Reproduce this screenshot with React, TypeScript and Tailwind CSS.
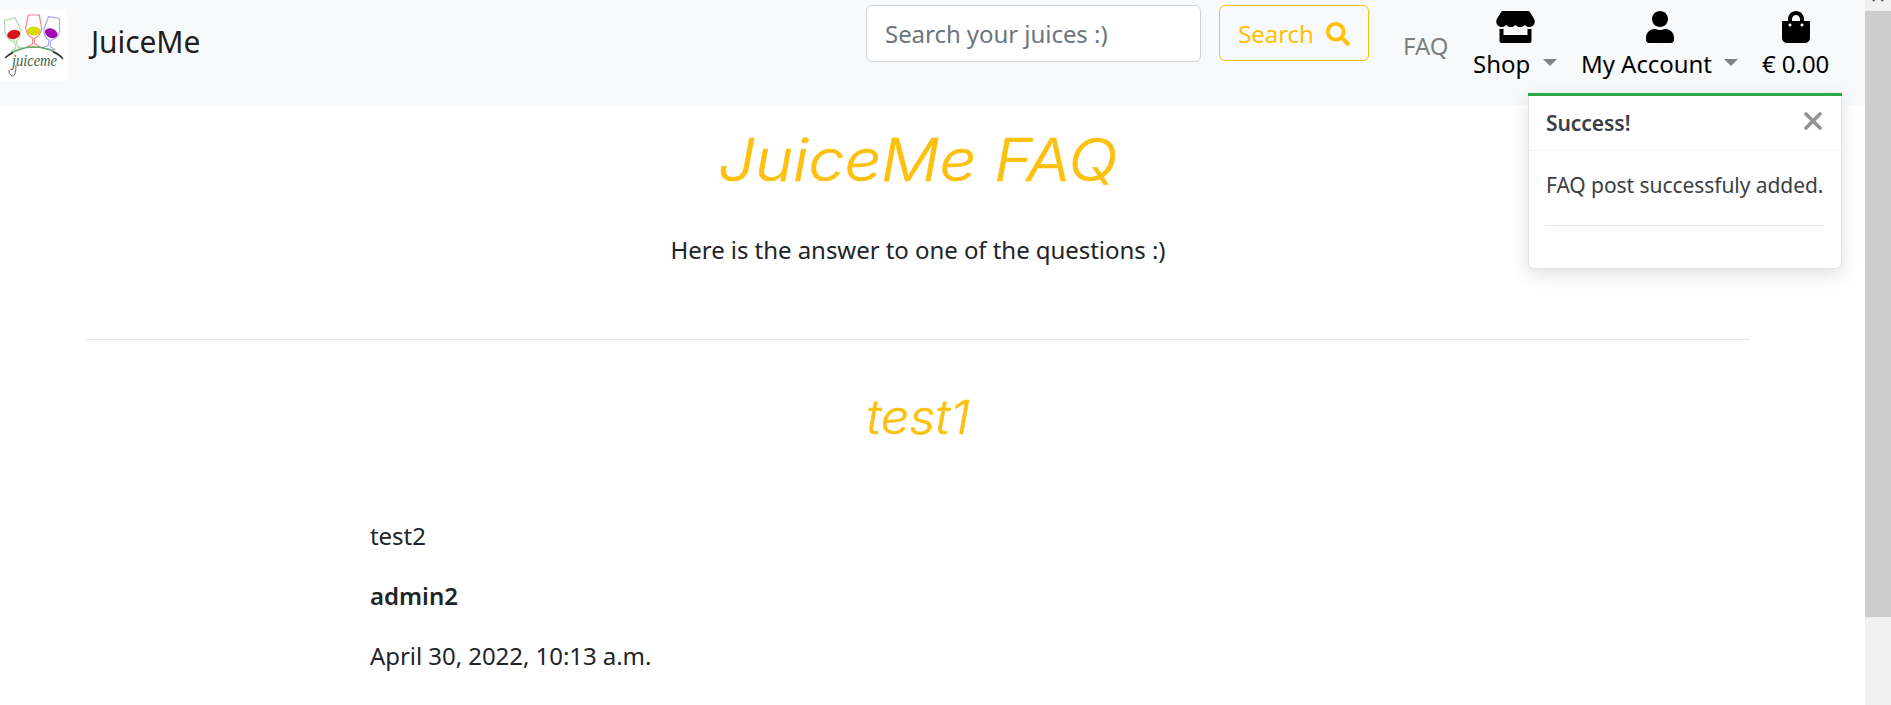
import type { ReactNode } from "react";
import { FaSearch, FaShoppingBag, FaStore, FaUser } from "react-icons/fa";

function Glass({ x, y, tilt, stroke, fill }: { x: number; y: number; tilt: number; stroke: string; fill: string }) {
  return (
    <g transform={`translate(${x} ${y}) rotate(${tilt})`} fill="none" stroke={stroke} strokeWidth="1.2">
      <ellipse cx="0" cy="16" rx="6.6" ry="4.6" transform={`rotate(${tilt > 0 ? 12 : 0} 0 16)`} fill={fill} stroke="none" />
      <path d="M-5.5 0H5.5L8 13Q7 21 1 23V29L7 32H-7L-1 29V23Q-7 21-8 13Z" opacity="0.7" />
    </g>
  );
}

function Logo() {
  return (
    <svg className="h-[72px] w-[67px] shrink-0 bg-white" viewBox="0 0 67 72">
      <Glass x={9.8} y={10} tilt={-14} stroke="#8fce80" fill="#d91020" />
      <Glass x={33.7} y={6} tilt={0} stroke="#f05060" fill="#d8dc00" />
      <Glass x={54} y={8.5} tilt={10} stroke="#8582e4" fill="#a409b5" />
      <path d="M6 48Q18 38 34 38Q50 38 62 48" fill="none" stroke="#5cab62" strokeWidth="1.5" />
      <path d="M5 49Q8 46 13 43.500M53 43Q59 45 63 50" fill="none" stroke="#333" strokeWidth="1.4" />
      <text x="12" y="57" textLength="45" lengthAdjust="spacingAndGlyphs" fontFamily="Liberation Serif, serif" fontStyle="italic" fontSize="16" fill="#3f5f45">
        juiceme
      </text>
      <path d="M16 56Q16 68 12 67Q8 65 9 61" fill="none" stroke="#666" strokeWidth="1" />
    </svg>
  );
}

function Caret() {
  return (
    <svg className="mt-[-4px] h-[7px] w-[14px]" viewBox="0 0 14 7">
      <path d="M0 0H14L7 7Z" fill="#808182" />
    </svg>
  );
}

function NavItem({ icon, label, caret, className }: { icon: ReactNode; label: string; caret?: boolean; className: string }) {
  return (
    <a className={`flex flex-col items-center pt-[11px] text-black ${className}`}>
      {icon}
      <span className="mt-[3px] flex w-full items-center justify-between whitespace-nowrap leading-9">
        {label}
        {caret && <Caret />}
      </span>
    </a>
  );
}

function Header() {
  return (
    <header className="flex h-[105px] items-start bg-[#f8f9fa]">
      <div className="flex items-center pt-[9px]">
        <Logo />
        <span className="mb-[7px] ml-[24px] text-[30px] leading-[45px] tracking-[-0.1px] text-black/90">JuiceMe</span>
      </div>
      <form className="ml-auto flex items-start pt-[5px]">
        <input
          className="h-[57px] w-[335px] rounded-[6px] border border-[#ced4da] bg-white px-[18px] text-[24px] tracking-[-0.05px] placeholder:text-[#6c757d] placeholder:opacity-100"
          placeholder="Search your juices :)"
        />
        <button type="button" className="ml-[18px] flex h-[56px] w-[150px] items-center justify-center gap-[12px] rounded-[6px] border border-[#ffc107] pt-px text-[#ffc107]">
          Search
          <FaSearch className="size-[24px]" />
        </button>
      </form>
      <nav className="mr-[36px] flex items-start">
        <a className="ml-[34px] w-[46px] pt-[28px] leading-9 text-black/50">FAQ</a>
        <NavItem className="ml-[24px] w-[84px]" icon={<FaStore className="h-[32px] w-[39px]" />} label="Shop" caret />
        <NavItem className="ml-[24px] w-[157px]" icon={<FaUser className="h-[32px] w-[28px]" />} label="My Account" caret />
        <NavItem className="ml-[24px] w-[67px]" icon={<FaShoppingBag className="h-[32px] w-[28px]" />} label="€ 0.00" />
      </nav>
    </header>
  );
}

function Toast() {
  return (
    <aside className="absolute top-[93px] left-[1528px] h-[176px] w-[314px] rounded-b-[6px] border-x border-b border-black/10 bg-white text-[#3b4045] shadow-[0_6px_18px_rgba(0,0,0,0.12)]">
      <div className="-mx-px h-[3px] bg-[#28a745]" />
      <div className="flex h-[55px] items-center justify-between border-b border-black/5 pr-[19px] pl-[17px]">
        <strong className="mt-[2px] text-[21px] font-semibold">Success!</strong>
        <svg className="mt-[-4px] size-[18px]" viewBox="0 0 18 18">
          <path d="M2 2L16 16M16 2L2 16" stroke="#929496" strokeWidth="3.6" strokeLinecap="round" />
        </svg>
      </div>
      <p className="px-[17px] pt-[18px] text-[21px] leading-[32px] tracking-[-0.06px] whitespace-nowrap">FAQ post successfuly added.</p>
      <hr className="mx-[17px] mt-[24px] border-black/10" />
    </aside>
  );
}

function Scrollbar() {
  return (
    <div className="flex w-[26px] shrink-0 flex-col bg-[#f0f0f0]">
      <svg className="h-[11px] w-full" viewBox="0 0 26 11">
        <path d="M8 1L13-4L18 1" fill="none" stroke="#505050" strokeWidth="2" />
      </svg>
      <div className="h-[606px] bg-[#cdcdcd]" />
    </div>
  );
}

export default function App() {
  return (
    <div className="relative flex h-[705px] w-[1891px] overflow-hidden bg-white font-['Noto_Sans',sans-serif] text-[24px] tracking-[-0.05px] text-[#212529]">
      <div className="flex-1">
        <Header />
        <main className="px-[86px]">
          <div className="mr-[29px] flex flex-col items-center">
            <h1 className="mt-[19px] h-[72px] scale-x-[1.11] text-[58.5px] leading-[72px] font-light tracking-[-0.1px] whitespace-nowrap text-[#fcc010] italic font-['Inter',sans-serif] [-webkit-text-stroke:0.6px_#fcc010]">JuiceMe FAQ</h1>
            <p className="mt-[36px] leading-9">Here is the answer to one of the questions :)</p>
            <hr className="mt-[71px] w-full border-black/10" />
            <h2 className="mt-[48px] h-[59px] scale-x-[1.08] text-[46.5px] leading-[58px] font-light tracking-normal text-[#fcc010] italic font-['Inter',sans-serif] [-webkit-text-stroke:0.4px_#fcc010]">test1</h2>
          </div>
          <article className="mt-[71px] flex flex-col gap-[24px] pl-[284px] leading-9">
            <p>test2</p>
            <p className="font-semibold tracking-normal">admin2</p>
            <p>April 30, 2022, 10:13 a.m.</p>
          </article>
        </main>
      </div>
      <Toast />
      <Scrollbar />
    </div>
  );
}
